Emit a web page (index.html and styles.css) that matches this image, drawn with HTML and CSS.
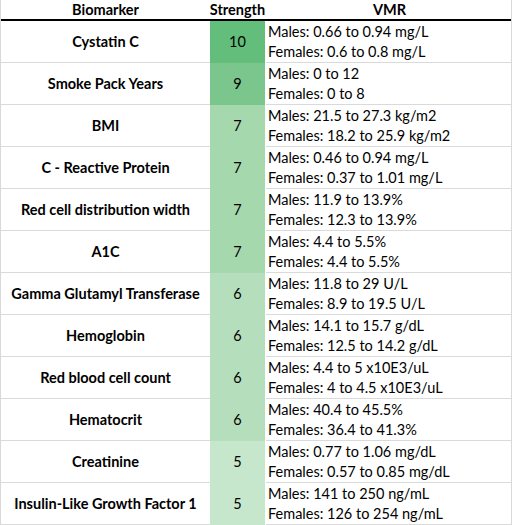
FILE: index.html
```html
<html>
<head>
	<title>Biomarkers</title>
	<meta charset="utf-8" />
	<link rel="stylesheet" href="styles.css">
</head>
<body>
	<div class="sheet">
		<div class="row head">
			<div class="cell name">Biomarker</div>
			<div class="cell strength">Strength</div>
			<div class="cell vmr vmr-head">VMR</div>
		</div>

		<div class="row">
			<div class="cell name">Cystatin C</div>
			<div class="cell strength s10">10</div>
			<div class="cell vmr"><span>Males: 0.66 to 0.94 mg/L</span><span>Females: 0.6 to 0.8 mg/L</span></div>
		</div>
		<div class="row">
			<div class="cell name">Smoke Pack Years</div>
			<div class="cell strength s9">9</div>
			<div class="cell vmr"><span>Males: 0 to 12</span><span>Females: 0 to 8</span></div>
		</div>
		<div class="row">
			<div class="cell name">BMI</div>
			<div class="cell strength s7">7</div>
			<div class="cell vmr"><span>Males: 21.5 to 27.3 kg/m2</span><span>Females: 18.2 to 25.9 kg/m2</span></div>
		</div>
		<div class="row">
			<div class="cell name">C - Reactive Protein</div>
			<div class="cell strength s7">7</div>
			<div class="cell vmr"><span>Males: 0.46 to 0.94 mg/L</span><span>Females: 0.37 to 1.01 mg/L</span></div>
		</div>
		<div class="row">
			<div class="cell name">Red cell distribution width</div>
			<div class="cell strength s7">7</div>
			<div class="cell vmr"><span>Males: 11.9 to 13.9%</span><span>Females: 12.3 to 13.9%</span></div>
		</div>
		<div class="row">
			<div class="cell name">A1C</div>
			<div class="cell strength s7">7</div>
			<div class="cell vmr"><span>Males: 4.4 to 5.5%</span><span>Females: 4.4 to 5.5%</span></div>
		</div>
		<div class="row">
			<div class="cell name">Gamma Glutamyl Transferase</div>
			<div class="cell strength s6">6</div>
			<div class="cell vmr"><span>Males: 11.8 to 29 U/L</span><span>Females: 8.9 to 19.5 U/L</span></div>
		</div>
		<div class="row">
			<div class="cell name">Hemoglobin</div>
			<div class="cell strength s6">6</div>
			<div class="cell vmr"><span>Males: 14.1 to 15.7 g/dL</span><span>Females: 12.5 to 14.2 g/dL</span></div>
		</div>
		<div class="row">
			<div class="cell name">Red blood cell count</div>
			<div class="cell strength s6">6</div>
			<div class="cell vmr"><span>Males: 4.4 to 5 x10E3/uL</span><span>Females: 4 to 4.5 x10E3/uL</span></div>
		</div>
		<div class="row">
			<div class="cell name">Hematocrit</div>
			<div class="cell strength s6">6</div>
			<div class="cell vmr"><span>Males: 40.4 to 45.5%</span><span>Females: 36.4 to 41.3%</span></div>
		</div>
		<div class="row">
			<div class="cell name">Creatinine</div>
			<div class="cell strength s5">5</div>
			<div class="cell vmr"><span>Males: 0.77 to 1.06 mg/dL</span><span>Females: 0.57 to 0.85 mg/dL</span></div>
		</div>
		<div class="row">
			<div class="cell name">Insulin-Like Growth Factor 1</div>
			<div class="cell strength s5">5</div>
			<div class="cell vmr"><span>Males: 141 to 250 ng/mL</span><span>Females: 126 to 254 ng/mL</span></div>
		</div>
	</div>
</body>
</html>
```

FILE: styles.css
```css
body {
	margin: 0;
	background: #ffffff;
	color: #000000;
	font-family: "Lato", "Open Sans", sans-serif;
	font-size: 14.5px;
}

.sheet {
	width: 512px;
	box-sizing: border-box;
	border-left: 1px solid #d9d9d9;
	border-right: 1px solid #d9d9d9;
}

.row {
	display: grid;
	grid-template-columns: 209px 56px 1fr;
	height: 42px;
}

.cell {
	box-sizing: border-box;
	border-bottom: 1px solid #dadada;
	display: flex;
	align-items: center;
	justify-content: center;
}

.name {
	font-weight: bold;
	font-size: 14.5px;
	text-align: center;
	white-space: nowrap;
}

/* header row */
.row.head {
	height: 21px;
	border-bottom: 2px solid #000000;
	box-sizing: border-box;
}
.head .cell {
	border-bottom: none;
	font-weight: bold;
	padding-bottom: 1px;
}
.head .strength {
	white-space: nowrap;
}

.strength {
	border-bottom-color: transparent;
	margin-right: 1px;
}

.vmr {
	flex-direction: column;
	align-items: flex-start;
	justify-content: center;
	padding-left: 2px;
	white-space: nowrap;
}
.vmr > span {
	line-height: 20px;
}
.vmr.vmr-head {
	align-items: center;
}

/* colour scale */
.s10 { background: #63be7b; }
.s9 { background: #7bc68d; }
.s7 { background: #a6d8ae; }
.s6 { background: #b5dfbc; }
.s5 { background: #c6e7cb; }
```
